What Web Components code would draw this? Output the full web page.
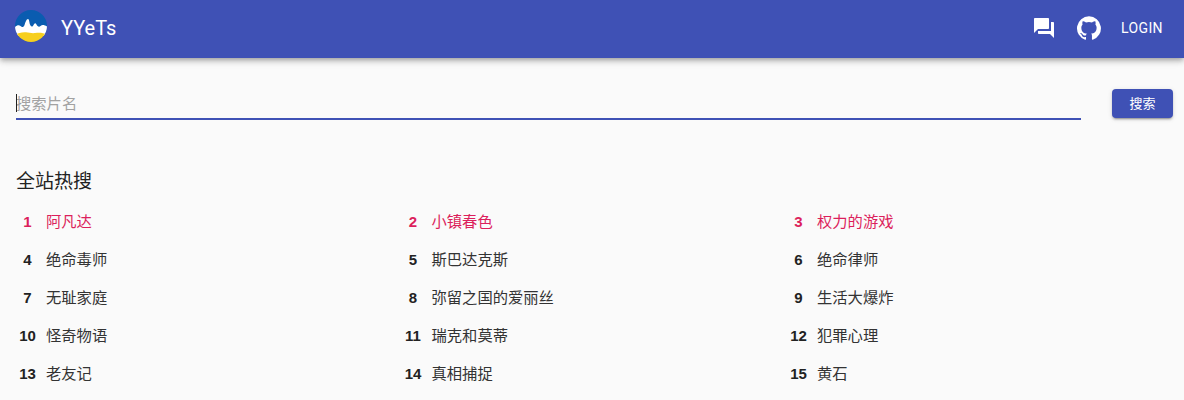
<!DOCTYPE html>
<html><head><meta charset="utf-8">
<style>
html,body{margin:0;padding:0;background:#fafafa;overflow:hidden;height:400px}
body{font-family:Roboto,"Noto Sans CJK SC",sans-serif}
</style></head>
<body>
<yy-app></yy-app>
<script>
const FONT='Roboto,"Noto Sans CJK SC",sans-serif';
class YYBar extends HTMLElement{constructor(){super();this.attachShadow({mode:'open'}).innerHTML=`
<style>
:host{display:flex;align-items:center;height:58px;box-sizing:border-box;background:#3f51b5;color:#fff;padding:0 21px 2px 15px;font-family:${FONT};
box-shadow:0 2px 4px -1px rgba(0,0,0,.2),0 4px 5px 0 rgba(0,0,0,.14),0 1px 10px 0 rgba(0,0,0,.12);position:relative}
.logo{width:32px;height:32px;display:block;margin-right:14px;margin-top:-4px}
.title{font-size:20px;line-height:28px;flex:1}
.ic{display:block;fill:#fff}
.chat{width:24px;height:24px;margin-right:21px}
.gh{width:24px;height:24px;margin-right:20px}
.login{font-size:14px;letter-spacing:.4px;font-weight:400}
</style>
<svg class="logo" viewBox="0 0 32 32">
<defs><clipPath id="c"><circle cx="16" cy="16" r="16"/></clipPath></defs>
<g clip-path="url(#c)">
<rect width="32" height="32" fill="#0a5cb0"/>
<path d="M0 17C2 15 4 14.500 5.500 16 7 17.500 8.500 17.500 9.500 15 10.500 12 11.500 9 13 9 14.500 9 14 13 15.500 15.500 16.500 17 17.500 17 18.500 15 19.500 13 20.500 12.800 21.500 14.500 22.500 16.500 24 17.500 25.500 16 27 14.500 29 14.500 32 16.500V26H0Z" fill="#fff"/>
<path d="M0 25C3 23 7 22 11 22.300 14 22.500 17 23.500 20 23 24 22.300 28 22.500 32 24.500V32H0Z" fill="#f7cf1e"/>
</g></svg>
<div class="title">YYeTs</div>
<svg class="ic chat" viewBox="0 0 24 24"><path d="M21 6h-2v9H6v2c0 .55.45 1 1 1h11l4 4V7c0-.55-.45-1-1-1zm-4 6V3c0-.55-.45-1-1-1H3c-.55 0-1 .45-1 1v14l4-4h10c.55 0 1-.45 1-1z"/></svg>
<svg class="ic gh" viewBox="0 0 24 24"><path d="M12 .3a12 12 0 0 0-3.800 23.380c.6.120.830-.260.830-.570L9 21.070c-3.340.720-4.040-1.610-4.040-1.610-.550-1.390-1.340-1.760-1.340-1.760-1.080-.740.090-.730.090-.730 1.200.090 1.840 1.240 1.840 1.240 1.070 1.830 2.810 1.300 3.500 1 .1-.780.420-1.310.760-1.610-2.670-.3-5.470-1.330-5.470-5.930 0-1.310.470-2.380 1.240-3.220-.140-.3-.540-1.520.1-3.180 0 0 1-.320 3.300 1.230a11.500 11.500 0 0 1 6 0c2.280-1.550 3.290-1.230 3.290-1.230.640 1.660.240 2.880.120 3.180a4.650 4.650 0 0 1 1.230 3.220c0 4.610-2.800 5.630-5.480 5.920.420.360.810 1.100.810 2.220l-.010 3.290c0 .310.2.690.820.570A12 12 0 0 0 12 .3"/></svg>
<div class="login">LOGIN</div>`}}
customElements.define('yy-bar',YYBar);

class YYSearch extends HTMLElement{constructor(){super();this.attachShadow({mode:'open'}).innerHTML=`
<style>
:host{display:flex;align-items:flex-start;padding:0 11px 0 16px;font-family:${FONT}}
.field{flex:1;height:29px;box-sizing:border-box;border-bottom:2px solid #3f51b5;position:relative;font-size:15.3px;line-height:24px;color:#a2a2a2;padding-top:1px}
.caret{position:absolute;left:0;top:3px;width:1px;height:18px;background:#222}
.btn{width:61px;height:29px;margin-left:31px;margin-top:-2px;background:#3f51b5;color:#fff;border-radius:4px;font-size:13px;line-height:29px;text-align:center;
box-shadow:0 3px 1px -2px rgba(0,0,0,.2),0 2px 2px 0 rgba(0,0,0,.14),0 1px 5px 0 rgba(0,0,0,.12)}
</style>
<div class="field"><span class="caret"></span>搜索片名</div>
<div class="btn">搜索</div>`}}
customElements.define('yy-search',YYSearch);

class YYItem extends HTMLElement{constructor(){super();const r=this.getAttribute('rank'),hot=+r<=3;this.attachShadow({mode:'open'}).innerHTML=`
<style>
:host{display:flex;align-items:baseline;height:38px;line-height:38px;font-family:${FONT};font-size:15.3px;color:${hot?'#dc1f5c':'#333'}}
.r{width:23px;text-align:center;font-weight:700;font-size:15px;font-family:"Liberation Sans",sans-serif;margin-right:7px;color:${hot?'#dc1f5c':'#222'}}
</style>
<span class="r">${r}</span><span><slot></slot></span>`}}
customElements.define('yy-item',YYItem);

const names=['阿凡达','小镇春色','权力的游戏','绝命毒师','斯巴达克斯','绝命律师','无耻家庭','弥留之国的爱丽丝','生活大爆炸','怪奇物语','瑞克和莫蒂','犯罪心理','老友记','真相捕捉','黄石'];
class YYHot extends HTMLElement{constructor(){super();this.attachShadow({mode:'open'}).innerHTML=`
<style>
:host{display:block;padding:0 0 0 16px;font-family:${FONT}}
h2{margin:0 0 7px;font-weight:400;font-size:19px;line-height:28px;color:#222}
.grid{display:grid;grid-template-columns:385.5px 385.5px 1fr}
</style>
<h2>全站热搜</h2>
<div class="grid">${names.map((n,i)=>`<yy-item rank="${i+1}">${n}</yy-item>`).join('')}</div>`}}
customElements.define('yy-hot',YYHot);

class YYApp extends HTMLElement{constructor(){super();this.attachShadow({mode:'open'}).innerHTML=`
<style>
:host{display:block}
yy-search{margin-top:33px}
yy-hot{margin-top:48px}
</style>
<yy-bar></yy-bar><yy-search></yy-search><yy-hot></yy-hot>`}}
customElements.define('yy-app',YYApp);
</script>
</body></html>
